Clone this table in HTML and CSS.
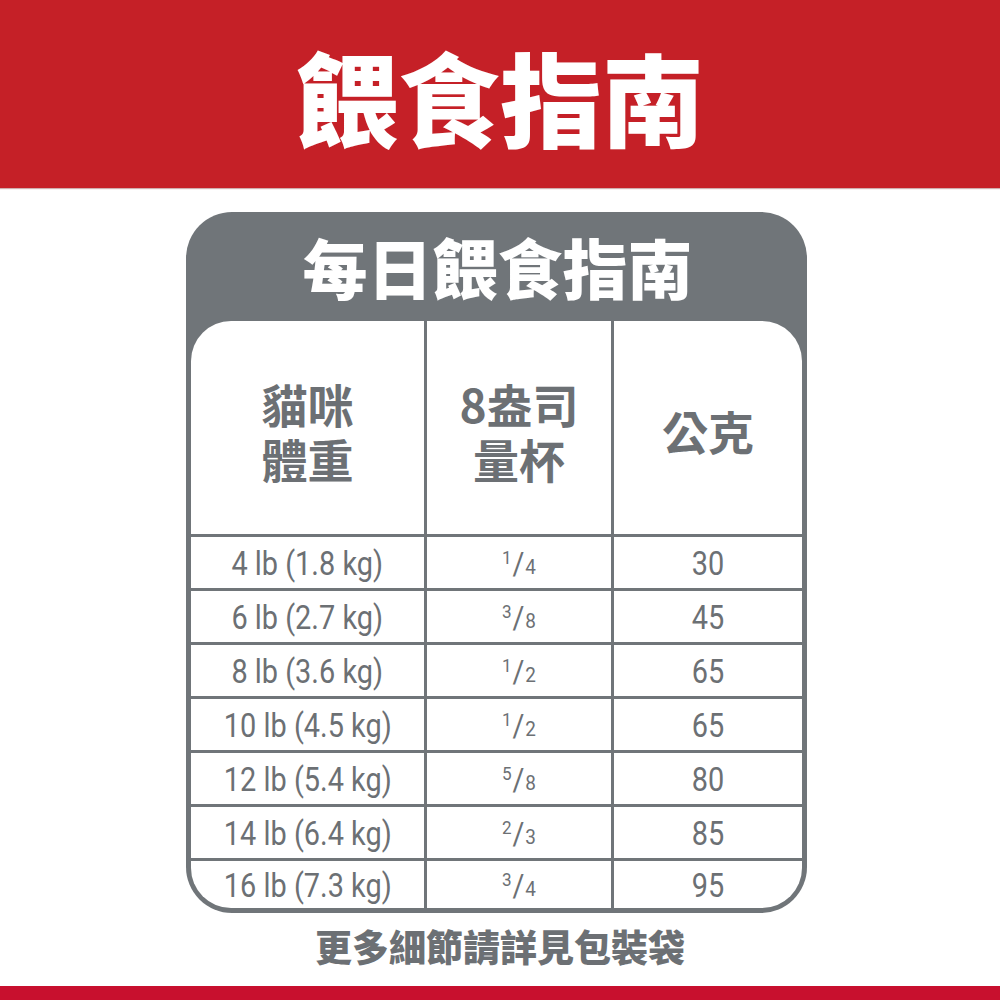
FILE: index.html
```html
<!DOCTYPE html>
<html lang="zh-Hant">
<head>
<meta charset="utf-8">
<title>餵食指南</title>
<link rel="stylesheet" href="styles.css">
</head>
<body>
<div class="page">
  <header class="banner"><h1 class="banner-title">餵食指南</h1></header>
  <main class="content">
    <section class="card">
      <h2 class="card-title">每日餵食指南</h2>
      <div class="table">
        <div class="cell head"><span class="line">貓咪</span><span class="line">體重</span></div>
        <div class="cell head"><span class="line">8盎司</span><span class="line">量杯</span></div>
        <div class="cell head"><span class="line">公克</span></div>

        <div class="cell data"><span class="num">4 lb (1.8 kg)</span></div>
        <div class="cell data"><span class="frac"><span class="n">1</span><span class="s">/</span><span class="d">4</span></span></div>
        <div class="cell data"><span class="num">30</span></div>

        <div class="cell data"><span class="num">6 lb (2.7 kg)</span></div>
        <div class="cell data"><span class="frac"><span class="n">3</span><span class="s">/</span><span class="d">8</span></span></div>
        <div class="cell data"><span class="num">45</span></div>

        <div class="cell data"><span class="num">8 lb (3.6 kg)</span></div>
        <div class="cell data"><span class="frac"><span class="n">1</span><span class="s">/</span><span class="d">2</span></span></div>
        <div class="cell data"><span class="num">65</span></div>

        <div class="cell data"><span class="num">10 lb (4.5 kg)</span></div>
        <div class="cell data"><span class="frac"><span class="n">1</span><span class="s">/</span><span class="d">2</span></span></div>
        <div class="cell data"><span class="num">65</span></div>

        <div class="cell data"><span class="num">12 lb (5.4 kg)</span></div>
        <div class="cell data"><span class="frac"><span class="n">5</span><span class="s">/</span><span class="d">8</span></span></div>
        <div class="cell data"><span class="num">80</span></div>

        <div class="cell data"><span class="num">14 lb (6.4 kg)</span></div>
        <div class="cell data"><span class="frac"><span class="n">2</span><span class="s">/</span><span class="d">3</span></span></div>
        <div class="cell data"><span class="num">85</span></div>

        <div class="cell data"><span class="num">16 lb (7.3 kg)</span></div>
        <div class="cell data"><span class="frac"><span class="n">3</span><span class="s">/</span><span class="d">4</span></span></div>
        <div class="cell data"><span class="num">95</span></div>
      </div>
    </section>
    <p class="note">更多細節請詳見包裝袋</p>
  </main>
  <div class="bottom-bar"></div>
</div>
</body>
</html>
```
FILE: styles.css
```css
html, body {
  margin: 0;
  padding: 0;
  background: #ffffff;
}
.page {
  width: 1000px;
  height: 1000px;
  display: flex;
  flex-direction: column;
  font-family: "Noto Sans CJK TC", "Noto Sans", sans-serif;
  overflow: hidden;
}
.banner {
  height: 188px;
  background: #c52027;
  display: flex;
  align-items: center;
  justify-content: center;
  box-shadow: 0 1px 1px rgba(120, 20, 20, 0.35);
}
.banner-title {
  margin: 0;
  padding-top: 4px;
  color: #ffffff;
  font-size: 102px;
  font-weight: 900;
  line-height: 1;
}
.content {
  padding-top: 24px;
  display: flex;
  flex-direction: column;
}
.card {
  width: 621px;
  margin-left: 186px;
  box-sizing: border-box;
  background: #707579;
  border-radius: 46px;
  padding: 0 5px 5px;
}
.card-title {
  margin: 0;
  height: 109px;
  display: flex;
  align-items: center;
  justify-content: center;
  color: #ffffff;
  font-size: 65px;
  font-weight: 900;
  line-height: 1;
  padding-left: 2px;
  box-sizing: border-box;
}
.table {
  display: grid;
  grid-template-columns: 233px 184px 188px;
  grid-template-rows: 213px repeat(6, 51px) 47px;
  gap: 3px;
  background: #707579;
  border-radius: 40px;
  overflow: hidden;
}
.cell {
  background: #ffffff;
  display: flex;
  align-items: center;
  justify-content: center;
  color: #6c7074;
}
.head {
  flex-direction: column;
  gap: 0;
  font-size: 46px;
  font-weight: 700;
  text-align: center;
  padding-top: 6px;
  box-sizing: border-box;
}
.head .line {
  display: block;
  line-height: 55px;
  height: 55px;
}
.data {
  font-family: Roboto, "Liberation Sans", sans-serif;
  font-size: 34px;
  font-weight: 400;
  line-height: 1;
}
.num {
  display: inline-block;
  transform: scaleX(0.85);
  white-space: nowrap;
}
.frac {
  display: inline-flex;
  align-items: baseline;
  transform: scaleX(0.9);
}
.frac .n {
  font-size: 19px;
  position: relative;
  top: -10px;
}
.frac .s {
  font-size: 32px;
  margin: 0 1px;
}
.frac .d {
  font-size: 21px;
}
.note {
  margin: 15px 0 0;
  text-align: center;
  color: #6c7074;
  font-size: 37px;
  font-weight: 900;
  line-height: 37px;
}
.bottom-bar {
  margin-top: auto;
  height: 14px;
  background: #c8102e;
}
```
